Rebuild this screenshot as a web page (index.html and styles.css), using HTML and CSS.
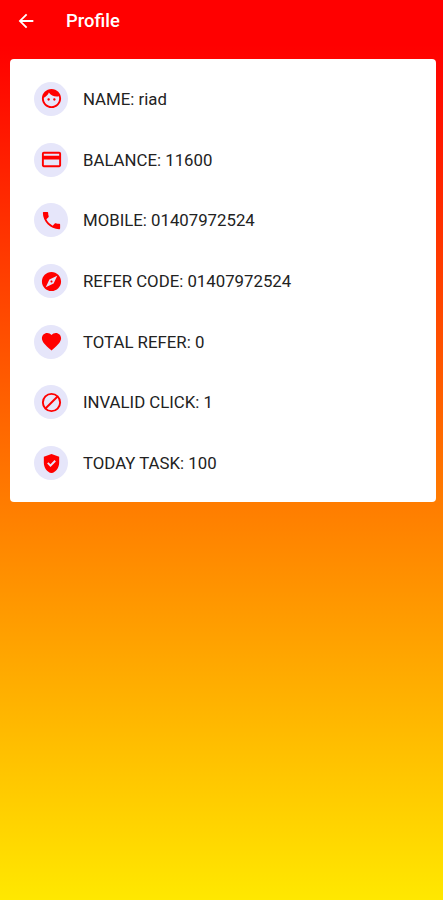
FILE: index.html
```html
<!DOCTYPE html>
<html lang="en">
<head>
    <meta charset="UTF-8">
    <meta name="viewport" content="width=device-width, initial-scale=1.0">
    <title>Profile</title>
    <link rel="stylesheet" href="styles.css">
</head>
<body>
    <header class="app-bar">
        <svg class="back-icon" viewBox="0 0 24 24"><path d="M20 11H7.83l5.59-5.59L12 4l-8 8 8 8 1.41-1.41L7.83 13H20v-2z"/></svg>
        <h1 class="title">Profile</h1>
    </header>

    <main class="page">
        <ul class="card">
            <li class="row">
                <span class="badge"><svg viewBox="0 0 24 24"><path d="M9 11.75c-.69 0-1.25.56-1.25 1.25s.56 1.25 1.25 1.25 1.25-.56 1.25-1.25-.56-1.25-1.25-1.25zm6 0c-.69 0-1.25.56-1.25 1.25s.56 1.25 1.25 1.25 1.25-.56 1.25-1.25-.56-1.25-1.25-1.25zM12 2C6.48 2 2 6.48 2 12s4.48 10 10 10 10-4.48 10-10S17.52 2 12 2zm0 18c-4.41 0-8-3.59-8-8 0-.29.02-.58.05-.86 2.36-1.05 4.23-2.98 5.21-5.37C11.07 8.33 14.05 10 17.42 10c.78 0 1.53-.09 2.25-.26.21.71.33 1.47.33 2.26 0 4.41-3.59 8-8 8z"/></svg></span>
                <span class="label">NAME: riad</span>
            </li>
            <li class="row">
                <span class="badge"><svg viewBox="0 0 24 24"><path d="M20 4H4c-1.11 0-1.99.89-1.99 2L2 18c0 1.11.89 2 2 2h16c1.11 0 2-.89 2-2V6c0-1.11-.89-2-2-2zm0 14H4v-6h16v6zm0-10H4V6h16v2z"/></svg></span>
                <span class="label">BALANCE: 11600</span>
            </li>
            <li class="row">
                <span class="badge"><svg viewBox="0 0 24 24"><path d="M6.62 10.79c1.44 2.83 3.76 5.14 6.59 6.59l2.2-2.2c.27-.27.67-.36 1.02-.24 1.12.37 2.33.57 3.57.57.55 0 1 .45 1 1V20c0 .55-.45 1-1 1-9.39 0-17-7.61-17-17 0-.55.45-1 1-1h3.5c.55 0 1 .45 1 1 0 1.25.2 2.45.57 3.57.11.35.03.74-.25 1.02l-2.2 2.2z"/></svg></span>
                <span class="label">MOBILE: 01407972524</span>
            </li>
            <li class="row">
                <span class="badge"><svg viewBox="0 0 24 24"><path d="M12 10.9c-.61 0-1.1.49-1.1 1.1s.49 1.1 1.1 1.1c.61 0 1.1-.49 1.1-1.1s-.49-1.1-1.1-1.1zM12 2C6.48 2 2 6.48 2 12s4.48 10 10 10 10-4.48 10-10S17.52 2 12 2zm2.19 12.19L6 18l3.81-8.19L18 6l-3.81 8.19z"/></svg></span>
                <span class="label">REFER CODE: 01407972524</span>
            </li>
            <li class="row">
                <span class="badge"><svg viewBox="0 0 24 24"><path d="M12 21.35l-1.45-1.32C5.4 15.36 2 12.28 2 8.5 2 5.42 4.42 3 7.5 3c1.74 0 3.41.81 4.5 2.09C13.09 3.81 14.76 3 16.5 3 19.58 3 22 5.42 22 8.5c0 3.78-3.4 6.86-8.55 11.54L12 21.35z"/></svg></span>
                <span class="label">TOTAL REFER: 0</span>
            </li>
            <li class="row">
                <span class="badge"><svg viewBox="0 0 24 24"><circle class="ring" cx="12" cy="12" r="9"/><path class="ring" d="M5.7 18.3L18.3 5.7"/></svg></span>
                <span class="label">INVALID CLICK: 1</span>
            </li>
            <li class="row">
                <span class="badge"><svg viewBox="0 0 24 24"><path d="M12 2L4 5v6.09c0 5.05 3.41 9.76 8 10.91 4.59-1.15 8-5.86 8-10.91V5l-8-3zm-1.06 13.54L7.4 12l1.41-1.41 2.12 2.12 4.24-4.24 1.41 1.41-5.64 5.66z"/></svg></span>
                <span class="label">TODAY TASK: 100</span>
            </li>
        </ul>
    </main>
</body>
</html>
```

FILE: styles.css
```css
* {
    box-sizing: border-box;
}

body {
    margin: 0;
    height: 900px;
    display: flex;
    flex-direction: column;
    font-family: Roboto, "Liberation Sans", sans-serif;
    background-color: #ff0000;
}

.app-bar {
    height: 45px;
    flex-shrink: 0;
    display: flex;
    align-items: center;
    padding: 0 15px 3px;
    background-color: #ff0000;
    color: white;
}

.back-icon {
    width: 22px;
    height: 22px;
    fill: white;
}

.title {
    margin: 0 0 0 29px;
    font-size: 18.4px;
    font-weight: 500;
    line-height: 24px;
}

.page {
    flex: 1;
    padding: 14px 7.5px 0 9.5px;
    background: linear-gradient(#ff0000, #ffe800);
}

.card {
    list-style: none;
    margin: 0;
    height: 443px;
    padding: 9.6px 24.5px;
    background-color: white;
    border-radius: 4px;
}

.row {
    height: 60.7px;
    display: flex;
    align-items: center;
}

.badge {
    width: 34px;
    height: 34px;
    display: flex;
    align-items: center;
    justify-content: center;
    border-radius: 50%;
    background-color: #e6e6fa;
}

.badge svg {
    width: 23px;
    height: 23px;
    fill: #ff0000;
}

.badge .ring {
    fill: none;
    stroke: #ff0000;
    stroke-width: 2;
}

.label {
    margin-left: 15px;
    font-size: 16.8px;
    color: #222;
}
```
